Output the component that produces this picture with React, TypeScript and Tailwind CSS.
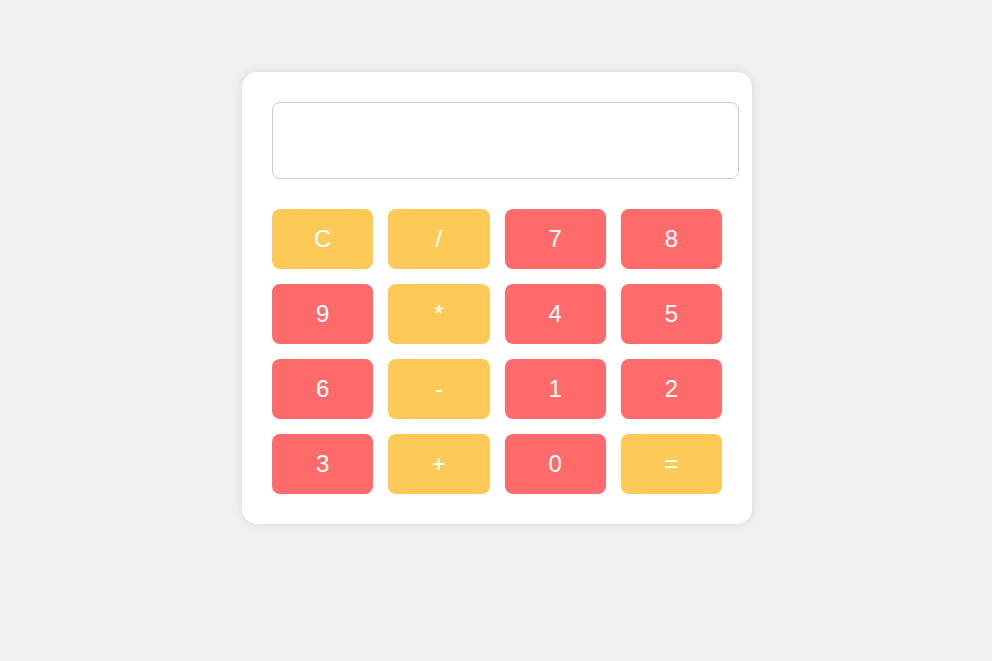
import React from "react";

const keys: { label: string; op: boolean }[] = [
  { label: "C", op: true },
  { label: "/", op: true },
  { label: "7", op: false },
  { label: "8", op: false },
  { label: "9", op: false },
  { label: "*", op: true },
  { label: "4", op: false },
  { label: "5", op: false },
  { label: "6", op: false },
  { label: "-", op: true },
  { label: "1", op: false },
  { label: "2", op: false },
  { label: "3", op: false },
  { label: "+", op: true },
  { label: "0", op: false },
  { label: "=", op: true },
];

export default function App() {
  return (
    <div className="min-h-[661px] w-full bg-[#f0f0f0] pt-[72px] font-['Liberation_Sans',Arial,sans-serif]">
      <div className="ml-[242px] w-[510px] rounded-[15px] bg-white p-[30px] shadow-[0_0_10px_rgba(0,0,0,0.1)]">
        <input
          type="text"
          readOnly
          className="block h-[77px] w-[467px] rounded-[8px] border border-[#cccccc] bg-white px-[10px] text-right text-[24px] outline-none"
        />
        <div className="mt-[30px] grid grid-cols-4 gap-[15px]">
          {keys.map((k) => (
            <button
              key={k.label}
              className={
                k.op
                  ? "flex h-[60px] items-center justify-center rounded-[8px] bg-[#feca57] text-[24px] text-white"
                  : "flex h-[60px] items-center justify-center rounded-[8px] bg-[#ff6b6b] text-[24px] text-white"
              }
            >
              {k.label}
            </button>
          ))}
        </div>
      </div>
    </div>
  );
}
